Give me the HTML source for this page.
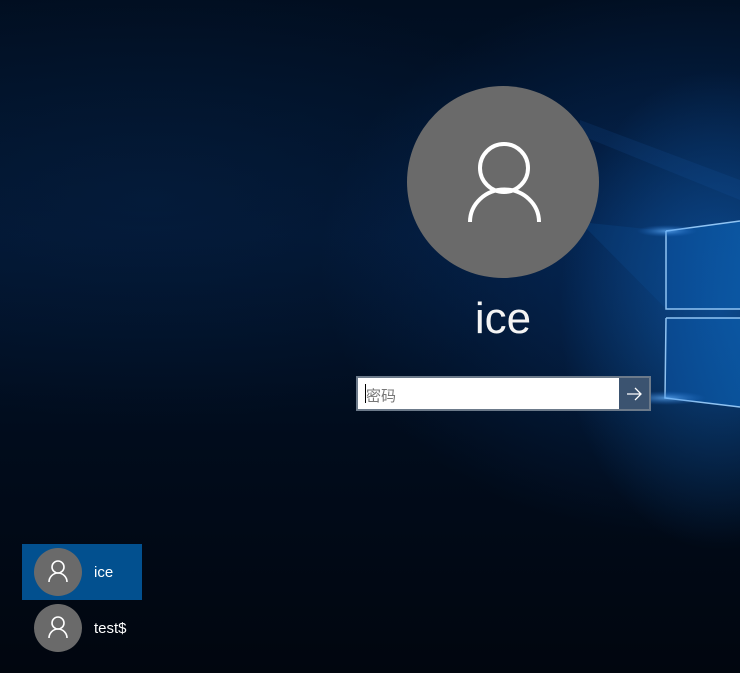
<!DOCTYPE html>
<html><head><meta charset="utf-8"><style>
html,body{margin:0;padding:0;}
body{width:740px;height:673px;overflow:hidden;position:relative;font-family:"Liberation Sans","Noto Sans CJK SC",sans-serif;
background:
radial-gradient(ellipse 160px 240px at 720px 310px, rgba(20,110,200,0.5), rgba(0,0,0,0) 100%),
radial-gradient(ellipse 380px 280px at 700px 260px, rgba(10,70,150,0.45), rgba(0,0,0,0) 100%),
radial-gradient(ellipse 450px 220px at 150px 200px, rgba(8,40,80,0.35), rgba(0,0,0,0) 100%),
linear-gradient(180deg,#010e20 0%,#021530 35%,#010c1c 65%,#01060f 100%);}
.abs{position:absolute}
</style></head><body>
<svg class="abs" style="left:0;top:0" width="740" height="673">
<defs>
<linearGradient id="pane" x1="0" x2="1" y1="0" y2="0"><stop offset="0" stop-color="#0a4c96"/><stop offset="1" stop-color="#0b5aa8"/></linearGradient>
<radialGradient id="beam" cx="0.5" cy="0.5" r="0.5"><stop offset="0" stop-color="#6ab6ff" stop-opacity=".7"/><stop offset="1" stop-color="#2070d0" stop-opacity="0"/></radialGradient>
</defs>
<polygon points="580,120 740,180 740,200 580,135" fill="#1a5fae" opacity=".15"/>
<polygon points="580,222 666,231 740,222 740,309 666,309" fill="#0c4e98" opacity=".25"/>
<polygon points="666,231 740,221 740,309 666,309" fill="url(#pane)" opacity=".8"/>
<polygon points="666,318 740,318 740,407 666,398" fill="url(#pane)" opacity=".8"/>
<path d="M666,231 L740,221 M666,231 L666,309 L740,309 M666,318 L740,318 M666,318 L665,398 L740,407" stroke="#9fd2ff" stroke-width="1.5" fill="none" opacity=".9"/>
<ellipse cx="667" cy="231" rx="30" ry="6" fill="url(#beam)"/>
<ellipse cx="666" cy="398" rx="40" ry="7" fill="url(#beam)"/>
<circle cx="503" cy="182" r="96" fill="#6a6a6a"/>
<circle cx="504" cy="168" r="24" fill="none" stroke="#fff" stroke-width="4"/>
<path d="M470,222 A34,32 0 0 1 539,222" fill="none" stroke="#fff" stroke-width="4"/>
<rect x="22" y="544" width="120" height="56" fill="#02508f"/>
<circle cx="58" cy="572" r="24" fill="#6a6a6a"/>
<circle cx="58" cy="628" r="24" fill="#6a6a6a"/>
<g fill="none" stroke="#fff" stroke-width="1.6">
<circle cx="58" cy="567" r="6"/><path d="M49,582 A9,9 0 0 1 67,582"/>
<circle cx="58" cy="623" r="6"/><path d="M49,638 A9,9 0 0 1 67,638"/>
</g>
<rect x="357" y="377" width="293" height="33" fill="#fff" stroke="#6c7a8a" stroke-width="2"/>
<rect x="619" y="378" width="30" height="31" fill="#3b5370"/>
<path d="M627,394 L641,394 M635,388 L641,394 L635,400" stroke="#fff" stroke-width="1.3" fill="none"/>
<rect x="365" y="384" width="1" height="19" fill="#000"/>
</svg>
<div class="abs" style="left:403px;top:294px;width:200px;text-align:center;color:#f4f4f4;font-size:44px;">ice</div>
<div class="abs" style="left:366px;top:385px;color:#777;font-size:15px;">密码</div>
<div class="abs" style="left:94px;top:564px;color:#fff;font-size:15px;">ice</div>
<div class="abs" style="left:94px;top:620px;color:#fff;font-size:15px;">test$</div>
</body></html>
